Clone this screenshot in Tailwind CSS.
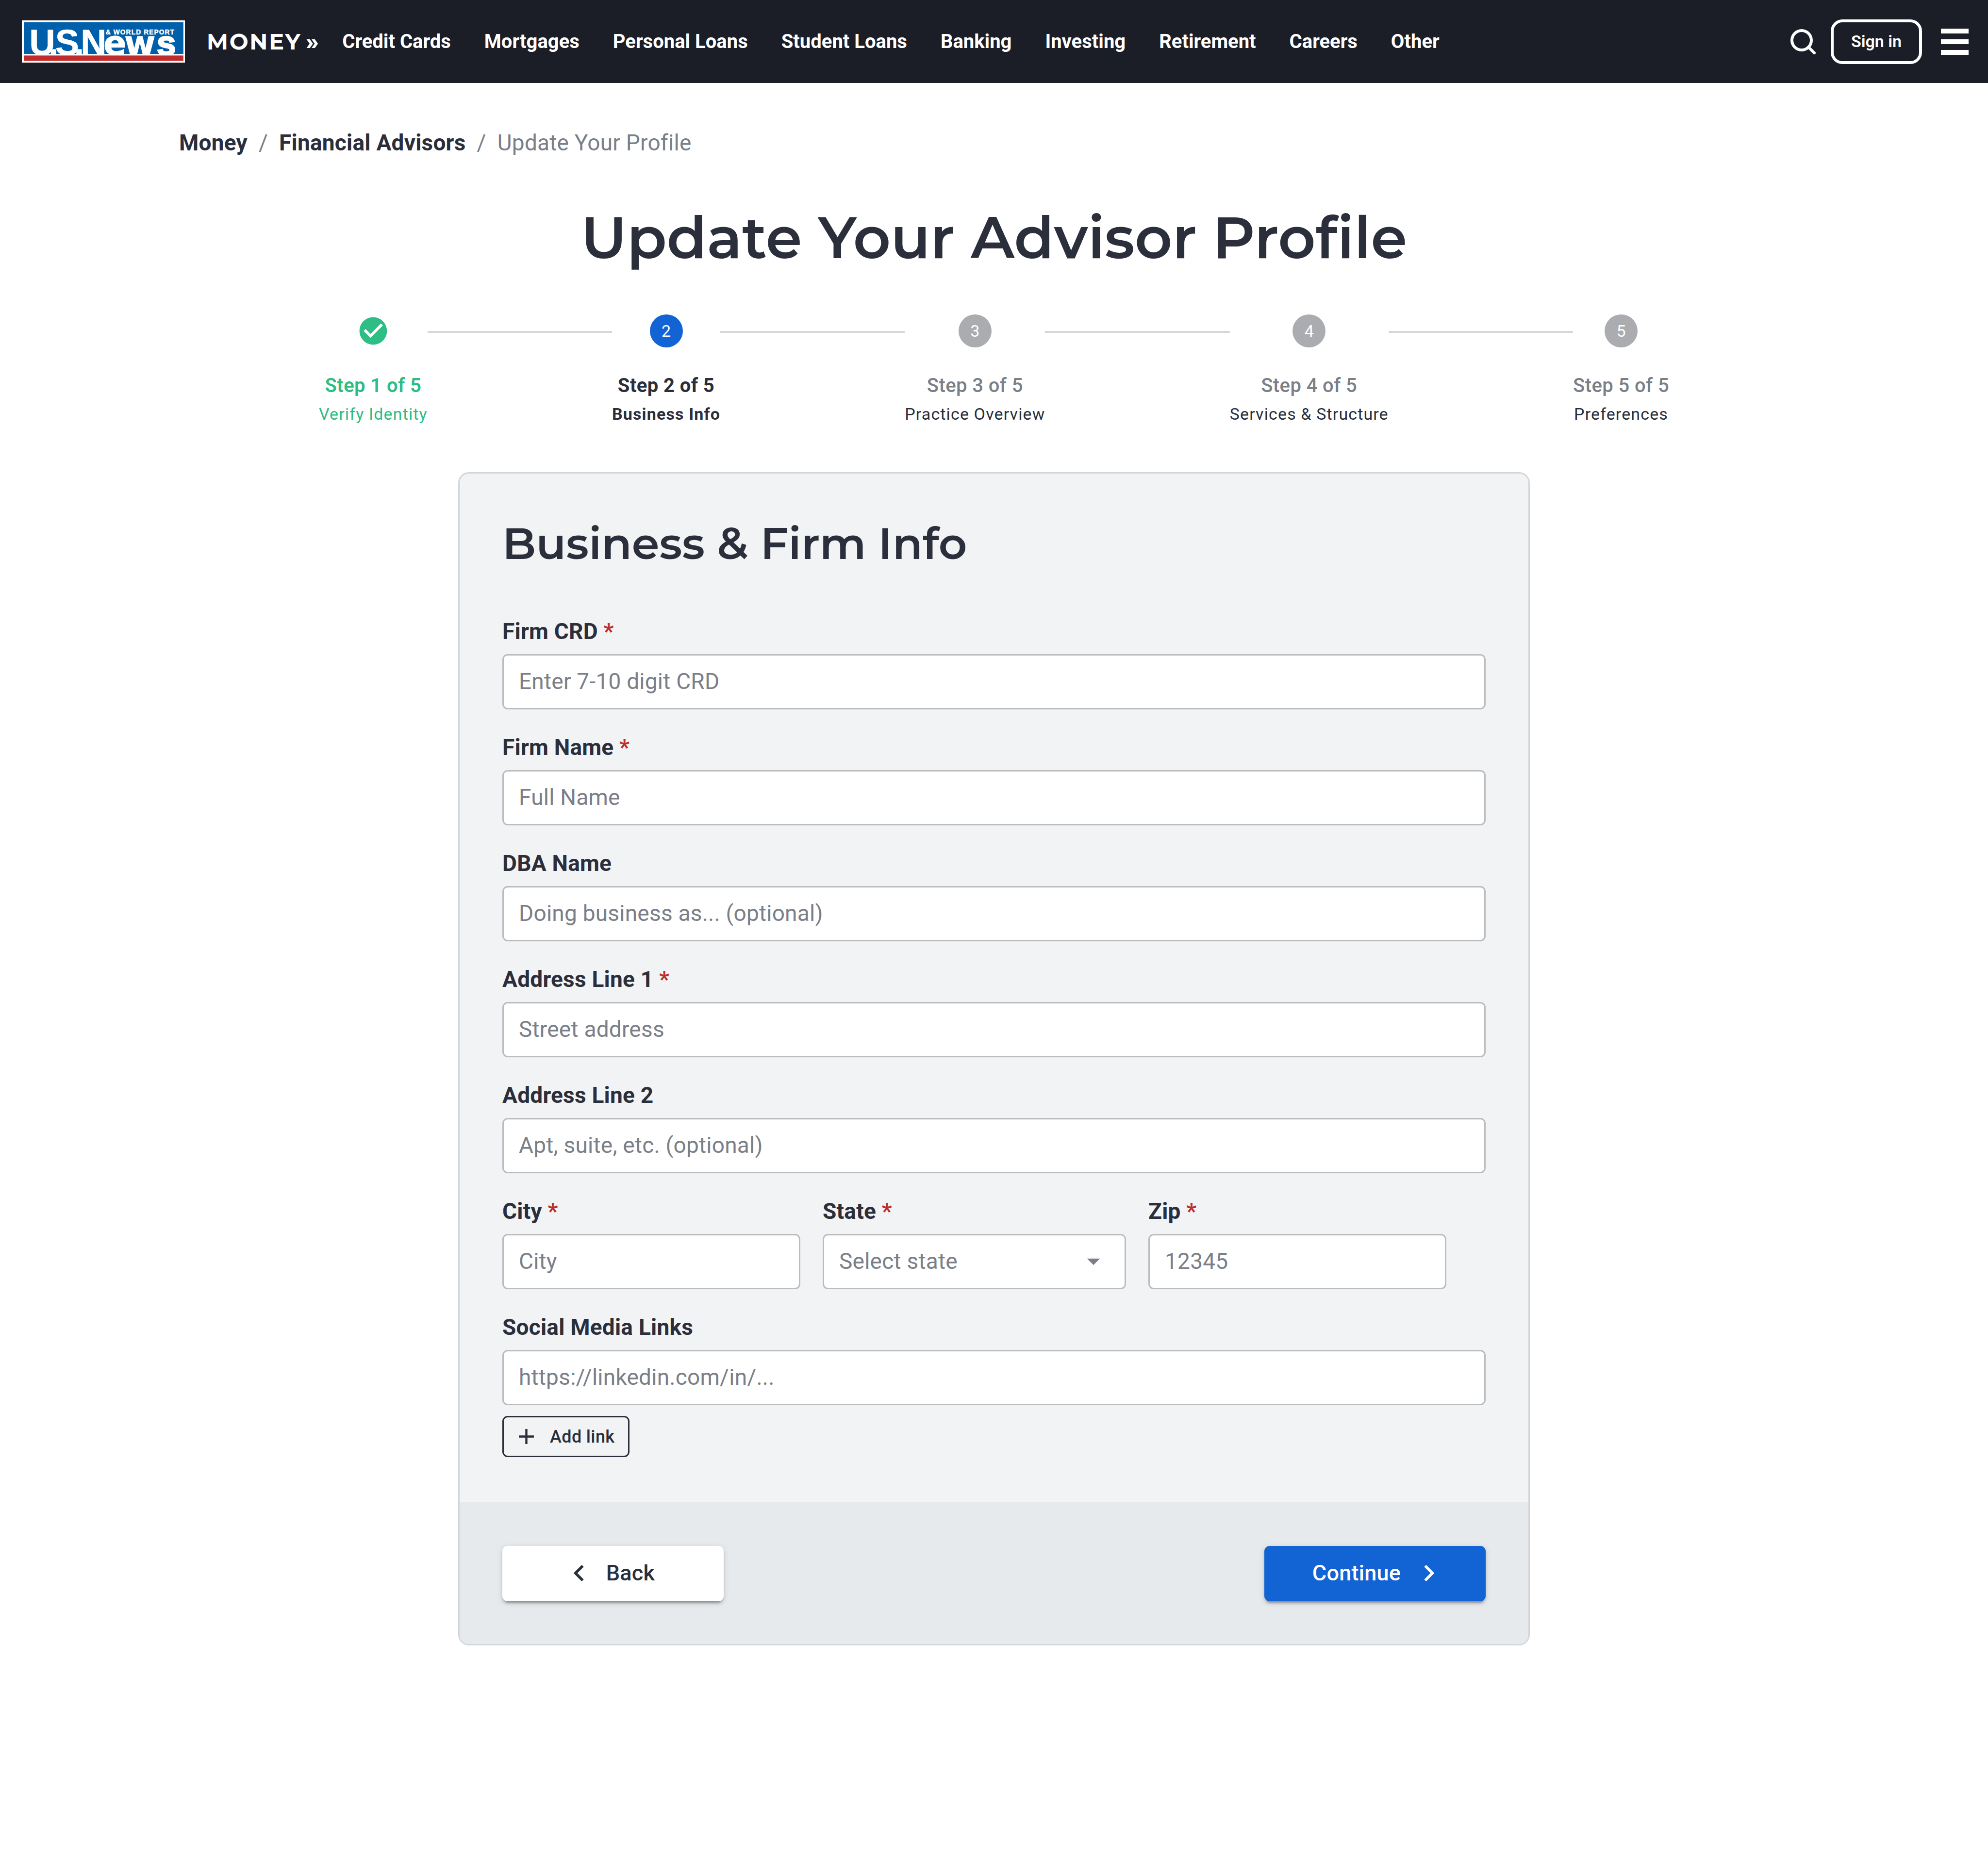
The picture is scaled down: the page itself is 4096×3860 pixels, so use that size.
<!DOCTYPE html>
<html lang="en">

<head>
	<meta charset="UTF-8">
	<meta name="viewport" content="width=device-width, initial-scale=1.0">
	<title>Update Your Advisor Profile</title>
	<script src="https://cdn.jsdelivr.net/npm/@tailwindcss/browser@4"></script>
	<style>
		body {
			font-family: Roboto, "Liberation Sans", sans-serif;
		}
	</style>
</head>

<body class="min-h-screen bg-white text-[#2b2f3b]">

	<header class="flex h-[171px] items-center bg-[#1b1d27] pl-[45px] pr-[40px] text-white">
		<a href="#" aria-label="U.S. News home">
			<svg class="block h-[87px] w-[336px]" viewBox="0 0 1492 387" preserveAspectRatio="none">
				<rect width="1492" height="387" fill="#fff" />
				<rect x="18" y="17" width="1460" height="292" fill="#005fab" />
				<g fill="#fff" stroke="#fff" font-weight="700">
					<text font-family="Liberation Sans, sans-serif" font-size="326" stroke-width="3" y="315" x="69 245 307 478 539">U.S.N</text>
					<text font-family="DejaVu Sans, sans-serif" font-size="310" stroke-width="4" y="317" x="747 937">ew</text>
					<text font-family="Liberation Sans, sans-serif" font-size="314" stroke-width="13" y="317" x="1234">s</text>
					<text font-family="Liberation Sans, sans-serif" font-size="61" stroke-width="2" x="767" y="129" letter-spacing="5">&amp; WORLD REPORT</text>
				</g>
				<rect y="309" width="1492" height="78" fill="#fff" />
				<rect x="18" y="322" width="1460" height="49" fill="#c12d2d" />
			</svg>
		</a>
		<a href="#" class="ml-[45px] flex gap-[9px] font-[Montserrat,Inter,sans-serif] text-[46px] font-bold tracking-[0.06em]"><span>MONEY</span><span>»</span></a>
		<nav class="ml-[46px]">
			<ul class="flex gap-[69px] text-[40px] font-bold">
				<li><a href="#">Credit Cards</a></li>
				<li><a href="#">Mortgages</a></li>
				<li><a href="#">Personal Loans</a></li>
				<li><a href="#">Student Loans</a></li>
				<li><a href="#">Banking</a></li>
				<li><a href="#">Investing</a></li>
				<li><a href="#">Retirement</a></li>
				<li><a href="#">Careers</a></li>
				<li><a href="#">Other</a></li>
			</ul>
		</nav>
		<button type="button" aria-label="Search" class="ml-auto">
			<svg class="block size-[52px]" viewBox="0 0 52 52" fill="none" stroke="#fff" stroke-linecap="round">
				<circle cx="23" cy="23" r="20" stroke-width="6" />
				<path d="M37 37L49 49" stroke-width="6" />
			</svg>
		</button>
		<button type="button" class="ml-[31px] h-[92px] w-[188px] rounded-[24px] border-[6px] border-white text-[34px] font-semibold">Sign in</button>
		<button type="button" aria-label="Menu" class="ml-[39px] flex flex-col gap-[12px]">
			<span class="h-[10px] w-[57px] bg-white"></span>
			<span class="h-[10px] w-[57px] bg-white"></span>
			<span class="h-[10px] w-[57px] bg-white"></span>
		</button>
	</header>

	<nav aria-label="Breadcrumb" class="mt-[92px] px-[369px]">
		<ol class="flex gap-[23px] text-[46px] leading-[62px] tracking-[0.005em] text-[#7b7f88]">
			<li><a href="#" class="font-bold text-[#2b2f3b]">Money</a></li>
			<li aria-hidden="true">/</li>
			<li><a href="#" class="font-bold text-[#2b2f3b]">Financial Advisors</a></li>
			<li aria-hidden="true">/</li>
			<li>Update Your Profile</li>
		</ol>
	</nav>

	<main>
		<h1 class="mt-[91px] text-center font-[Montserrat,Inter,sans-serif] text-[120px] leading-[146px] font-semibold">Update Your Advisor Profile</h1>

		<!-- stepper -->
		<ol class="mx-auto mt-[86px] flex max-w-[2782px] items-start text-center">
			<li class="flex flex-col items-center text-[#2dbd85]">
				<svg class="size-[68px]" viewBox="0 0 24 24" fill="currentColor">
					<path d="M12 2C6.48 2 2 6.48 2 12s4.48 10 10 10 10-4.48 10-10S17.52 2 12 2zm-2 15l-5-5 1.41-1.41L10 14.17l7.59-7.59L19 8l-9 9z" />
				</svg>
				<span class="mt-[49px] text-[40px] leading-[60px] font-semibold tracking-[0.01em]">Step 1 of 5</span>
				<span class="text-[34px] leading-[56px] tracking-[0.033em]">Verify Identity</span>
			</li>
			<li aria-hidden="true" class="mt-[34px] h-[4px] flex-1 bg-[#d5d7d9]"></li>
			<li aria-current="step" class="flex flex-col items-center">
				<span class="size-[68px] rounded-full bg-[#1263d3] text-[34px] leading-[68px] text-white">2</span>
				<span class="mt-[49px] text-[40px] leading-[60px] font-bold tracking-[0.01em]">Step 2 of 5</span>
				<span class="text-[34px] leading-[56px] font-bold tracking-[0.033em]">Business Info</span>
			</li>
			<li aria-hidden="true" class="mt-[34px] h-[4px] flex-1 bg-[#d5d7d9]"></li>
			<li class="flex flex-col items-center">
				<span class="size-[68px] rounded-full bg-[#aaacb0] text-[34px] leading-[68px] text-white">3</span>
				<span class="mt-[49px] text-[40px] leading-[60px] font-medium tracking-[0.01em] text-[#7b7f88]">Step 3 of 5</span>
				<span class="text-[34px] leading-[56px] tracking-[0.033em]">Practice Overview</span>
			</li>
			<li aria-hidden="true" class="mt-[34px] h-[4px] flex-1 bg-[#d5d7d9]"></li>
			<li class="flex flex-col items-center">
				<span class="size-[68px] rounded-full bg-[#aaacb0] text-[34px] leading-[68px] text-white">4</span>
				<span class="mt-[49px] text-[40px] leading-[60px] font-medium tracking-[0.01em] text-[#7b7f88]">Step 4 of 5</span>
				<span class="text-[34px] leading-[56px] tracking-[0.033em]">Services &amp; Structure</span>
			</li>
			<li aria-hidden="true" class="mt-[34px] h-[4px] flex-1 bg-[#d5d7d9]"></li>
			<li class="flex flex-col items-center">
				<span class="size-[68px] rounded-full bg-[#aaacb0] text-[34px] leading-[68px] text-white">5</span>
				<span class="mt-[49px] text-[40px] leading-[60px] font-medium tracking-[0.01em] text-[#7b7f88]">Step 5 of 5</span>
				<span class="text-[34px] leading-[56px] tracking-[0.033em]">Preferences</span>
			</li>
		</ol>

		<form class="mx-auto mt-[92px] max-w-[2208px] overflow-hidden rounded-[22px] border-[3px] border-[#d3d6d9] bg-[#f2f3f5]">
			<div class="px-[88px] pt-[88px] pb-[92px]">
				<h2 class="font-[Montserrat,Inter,sans-serif] text-[91px] leading-[112px] font-semibold">Business &amp; Firm Info</h2>

				<div class="mt-[94px] flex flex-col gap-[47px] text-[46px] tracking-[0.005em]">
					<div class="flex flex-col gap-4">
						<label for="firm-crd" class="leading-[62px] font-bold">Firm CRD <span class="text-[#c12d2d]">*</span></label>
						<input id="firm-crd" type="text" required placeholder="Enter 7-10 digit CRD" class="h-[114px] w-full rounded-[11px] border-[3px] border-[#babcc0] bg-white px-[31px] pb-[2px] placeholder:text-[#7b7f88]">
					</div>
					<div class="flex flex-col gap-4">
						<label for="firm-name" class="leading-[62px] font-bold">Firm Name <span class="text-[#c12d2d]">*</span></label>
						<input id="firm-name" type="text" required placeholder="Full Name" class="h-[114px] w-full rounded-[11px] border-[3px] border-[#babcc0] bg-white px-[31px] pb-[2px] placeholder:text-[#7b7f88]">
					</div>
					<div class="flex flex-col gap-4">
						<label for="dba-name" class="leading-[62px] font-bold">DBA Name</label>
						<input id="dba-name" type="text" placeholder="Doing business as... (optional)" class="h-[114px] w-full rounded-[11px] border-[3px] border-[#babcc0] bg-white px-[31px] pb-[2px] placeholder:text-[#7b7f88]">
					</div>
					<div class="flex flex-col gap-4">
						<label for="address-1" class="leading-[62px] font-bold">Address Line 1 <span class="text-[#c12d2d]">*</span></label>
						<input id="address-1" type="text" required placeholder="Street address" class="h-[114px] w-full rounded-[11px] border-[3px] border-[#babcc0] bg-white px-[31px] pb-[2px] placeholder:text-[#7b7f88]">
					</div>
					<div class="flex flex-col gap-4">
						<label for="address-2" class="leading-[62px] font-bold">Address Line 2</label>
						<input id="address-2" type="text" placeholder="Apt, suite, etc. (optional)" class="h-[114px] w-full rounded-[11px] border-[3px] border-[#babcc0] bg-white px-[31px] pb-[2px] placeholder:text-[#7b7f88]">
					</div>

					<div class="flex gap-[46px]">
						<div class="flex w-[614px] flex-col gap-4">
							<label for="city" class="leading-[62px] font-bold">City <span class="text-[#c12d2d]">*</span></label>
							<input id="city" type="text" required placeholder="City" class="h-[114px] w-full rounded-[11px] border-[3px] border-[#babcc0] bg-white px-[31px] pb-[2px] placeholder:text-[#7b7f88]">
						</div>
						<div class="flex w-[625px] flex-col gap-4">
							<label for="state" class="leading-[62px] font-bold">State <span class="text-[#c12d2d]">*</span></label>
							<div class="relative">
								<select id="state" required class="block h-[114px] w-full appearance-none rounded-[11px] border-[3px] border-[#babcc0] bg-white px-[31px] pb-[2px] tracking-[0.005em] text-[#7b7f88]">
									<option value="">Select state</option>
								</select>
								<svg class="pointer-events-none absolute top-[24px] right-[35px] size-[64px] text-[#7b7f88]" viewBox="0 0 24 24" fill="currentColor">
									<path d="M7 10l5 5 5-5z" />
								</svg>
							</div>
						</div>
						<div class="flex w-[614px] flex-col gap-4">
							<label for="zip" class="leading-[62px] font-bold">Zip <span class="text-[#c12d2d]">*</span></label>
							<input id="zip" type="text" required placeholder="12345" class="h-[114px] w-full rounded-[11px] border-[3px] border-[#babcc0] bg-white px-[31px] pb-[2px] placeholder:text-[#7b7f88]">
						</div>
					</div>

					<div class="flex flex-col gap-4">
						<label for="social" class="leading-[62px] font-bold">Social Media Links</label>
						<input id="social" type="url" placeholder="https://linkedin.com/in/..." class="h-[114px] w-full rounded-[11px] border-[3px] border-[#babcc0] bg-white px-[31px] pb-[2px] placeholder:text-[#7b7f88]">
					</div>
				</div>

				<button type="button" class="mt-[22px] flex h-[85px] items-center gap-[22px] rounded-[11px] border-[3px] border-[#2b2f3b] pr-[28px] pl-[20px] text-[36px] font-medium tracking-[0.01em]">
					<svg class="size-[53px]" viewBox="0 0 24 24" fill="currentColor">
						<path d="M19 13h-6v6h-2v-6H5v-2h6V5h2v6h6v2z" />
					</svg>
					Add link
				</button>
			</div>

			<div class="flex justify-between bg-[#e6eaed] px-[88px] pt-[91px] pb-[88px] text-[45px] font-medium tracking-[0.005em]">
				<button type="button" class="flex h-[114px] w-[456px] items-center justify-center gap-[22px] rounded-[11px] bg-white pr-[18px] pb-[2px] shadow-[0_8px_3px_-5px_rgba(0,0,0,0.2),0_5px_5px_rgba(0,0,0,0.14),0_3px_13px_rgba(0,0,0,0.12)]">
					<svg class="size-[68px]" viewBox="0 0 24 24" fill="currentColor">
						<path d="M15.41 7.41L14 6l-6 6 6 6 1.41-1.41L10.83 12z" />
					</svg>
					Back
				</button>
				<button type="submit" class="flex h-[114px] w-[456px] items-center justify-center gap-[24px] rounded-[11px] bg-[#1263d3] pl-4 pb-[2px] text-white shadow-[0_8px_3px_-5px_rgba(0,0,0,0.2),0_5px_5px_rgba(0,0,0,0.14),0_3px_13px_rgba(0,0,0,0.12)]">
					Continue
					<svg class="size-[68px]" viewBox="0 0 24 24" fill="currentColor">
						<path d="M10 6L8.59 7.41 13.17 12l-4.58 4.59L10 18l6-6z" />
					</svg>
				</button>
			</div>
		</form>
	</main>

</body>

</html>
